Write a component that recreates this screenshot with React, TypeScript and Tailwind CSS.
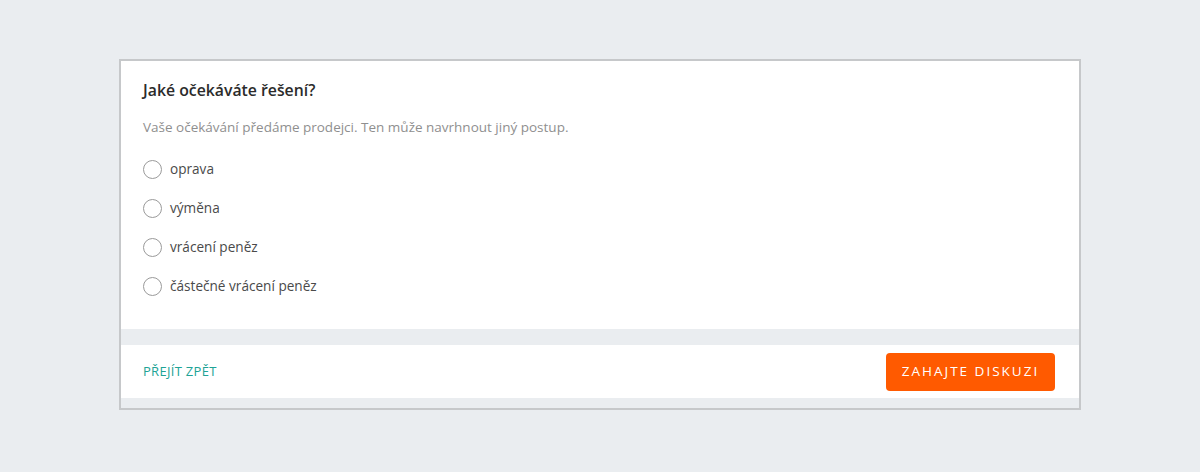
export default function App() {
  const options = ['oprava', 'výměna', 'vrácení peněz', 'částečné vrácení peněz'];
  return (
    <div className="min-h-[472px] bg-[#eaedf0] pt-[59px] font-['Open_Sans',sans-serif]">
      <div className="mx-auto w-[962px] border-2 border-[#c6c8ca] bg-white">
        <div className="px-[22px] pt-[19px] pb-[23px]">
          <h2 className="text-[15.8px] leading-5 font-semibold text-[#2b2b2b]">Jaké očekáváte řešení?</h2>
          <p className="mt-[17px] text-[13.5px] leading-5 text-[#8f8f8f]">
            Vaše očekávání předáme prodejci. Ten může navrhnout jiný postup.
          </p>
          <div className="mt-[13px] flex flex-col">
            {options.map((o) => (
              <label key={o} className="flex h-[39px] items-center gap-2 cursor-pointer">
                <span className="h-[19px] w-[19px] rounded-full border-[1.5px] border-[#9a9a9a] bg-white" />
                <span className="text-[13.6px] text-[#4a4a4a]">{o}</span>
              </label>
            ))}
          </div>
        </div>
        <div className="h-4 bg-[#eaedf0]" />
        <div className="flex h-[53px] items-center justify-between pl-[22px] pr-[24px]">
          <a className="text-[13px] tracking-[0.3px] text-[#20a396]">PŘEJÍT ZPĚT</a>
          <button className="h-[38px] w-[169px] rounded-sm bg-[#ff5a00] text-[13.5px] tracking-[2px] text-white">
            ZAHAJTE DISKUZI
          </button>
        </div>
        <div className="h-[10px] bg-[#eaedf0]" />
      </div>
    </div>
  );
}
